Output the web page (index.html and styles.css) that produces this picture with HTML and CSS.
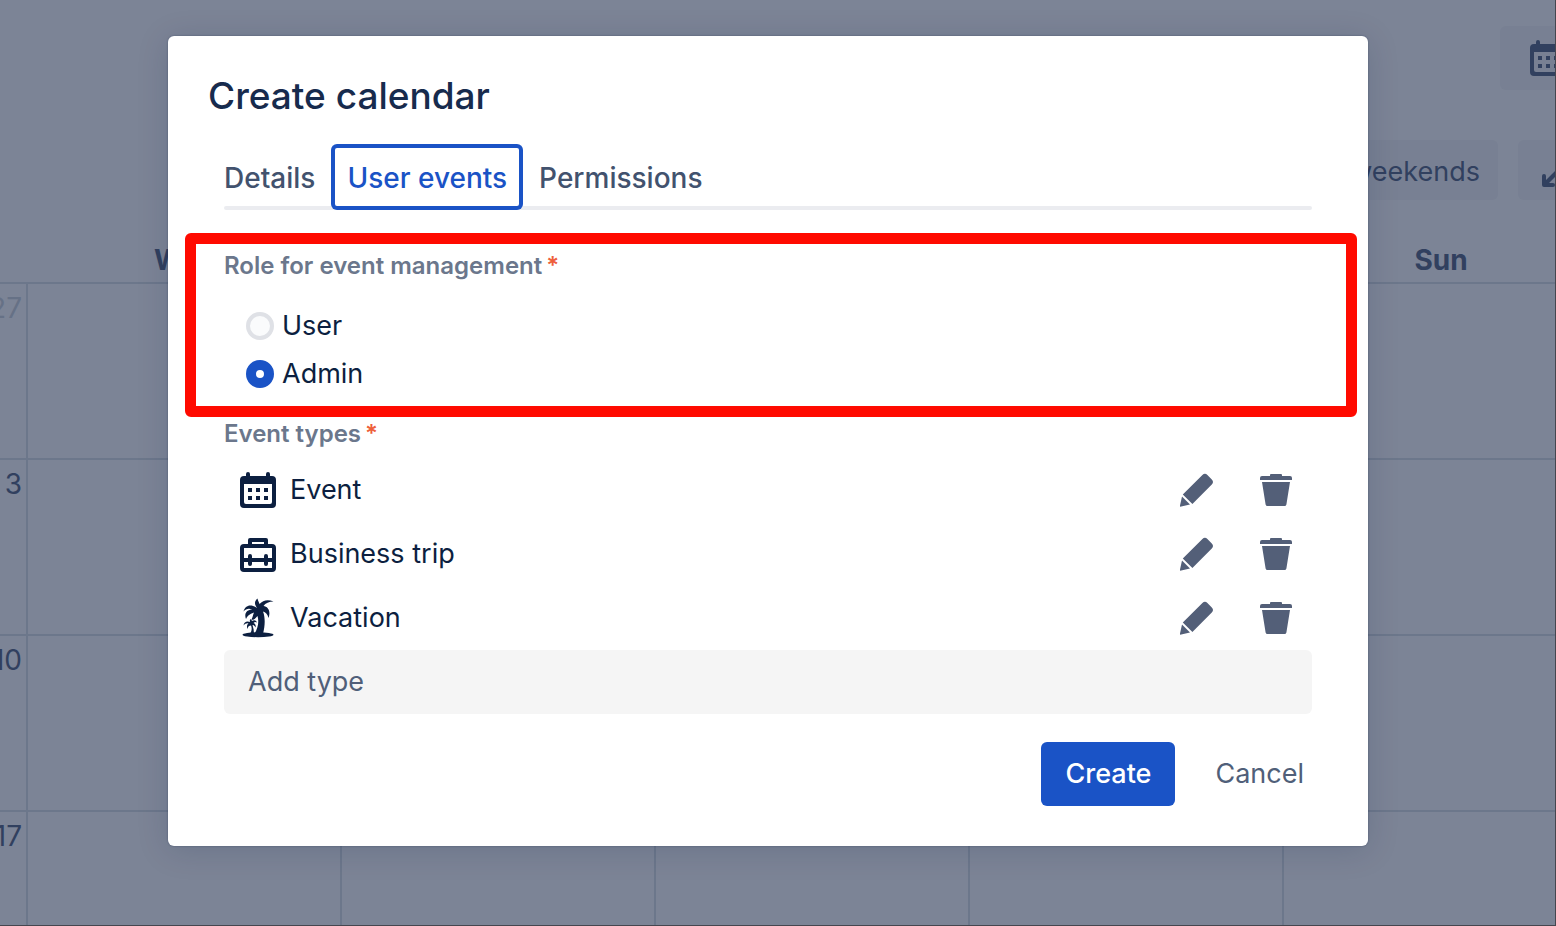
FILE: index.html
```html
<!DOCTYPE html>
<html lang="en">
<head>
    <meta charset="UTF-8">
    <meta name="viewport" content="width=device-width, initial-scale=1.0">
    <title>Create calendar</title>
    <link rel="stylesheet" href="styles.css">
</head>
<body>
    <!-- Shared icons -->
    <svg class="sprite" aria-hidden="true">
        <symbol id="icon-calendar" viewBox="0 0 24 24">
            <path fill-rule="evenodd" d="M6 5V4a1 1 0 0 1 2 0v1h8V4a1 1 0 0 1 2 0v1h1a2 2 0 0 1 2 2v12a2 2 0 0 1-2 2H5a2 2 0 0 1-2-2V7a2 2 0 0 1 2-2zM5 9v9a1 1 0 0 0 1 1h12a1 1 0 0 0 1-1V9zM7 11h2v2H7zM11 11h2v2h-2zM15 11h2v2h-2zM7 15h2v2H7zM11 15h2v2h-2zM15 15h2v2h-2z"/>
        </symbol>
        <symbol id="icon-briefcase" viewBox="0 0 24 24">
            <path fill-rule="evenodd" d="M7 7V5a1 1 0 0 1 1-1h8a1 1 0 0 1 1 1v2h2a2 2 0 0 1 2 2v10a2 2 0 0 1-2 2H5a2 2 0 0 1-2-2V9a2 2 0 0 1 2-2zM9 7h6V6H9zM5 9v5h2v-1a1 1 0 0 1 2 0v1h6v-1a1 1 0 0 1 2 0v1h2V9zM5 16v3h14v-3h-2v1a1 1 0 0 1-2 0v-1H9v1a1 1 0 0 1-2 0v-1z"/>
        </symbol>
        <symbol id="icon-palm" viewBox="0 0 48 48">
            <ellipse cx="24" cy="40.7" rx="15.5" ry="2.5"/>
            <path d="M23 14C20 10 20.500 7 23.500 4.500C24 7 25 8 25.500 10C29 6 34 5 39.500 7.500C35 7.500 31.500 9 29.500 12C34 12.500 37 17 34.500 24C33.500 20 31.500 18 29 17.500C31.500 24 31 32 29 40H20.500C24.500 33 25 27 23.500 22C21 25 19 26.500 17.500 25.500C18.500 23.500 19 21 20 18.500C15.500 20 13 22 12 25C9.800 19 13 15.500 18.500 15.500C15 14 12 14.500 9.500 17.500C11 11 17 9.500 23 14z"/>
            <path d="M16 28C15.500 26.500 16 25.500 17 25L18 27C20 25.500 22 26 23 28.500C21.500 27.500 20.500 28 19.500 29C21.500 29.500 22 31.500 21.500 33.500C20.500 31.500 19.500 31 18.500 31C19.500 34 20 37 20 40H16C18 36.500 18 34 17 31.500C15 31.500 14 32.500 13.500 35C12.500 32.500 13 30.500 14.500 29.500C12.500 29 11 30 9.500 31.500C10 28 13 26.500 16 28z"/>
        </symbol>
        <symbol id="icon-pencil" viewBox="0 0 24 24">
            <path d="M5.400 14.300L15.200 4.500a1.800 1.800 0 0 1 2.500 0l2.200 2.200a1.800 1.800 0 0 1 0 2.500L10.200 19zM5 15.200L9 19.300L4.600 20.300a.5.5 0 0 1-.6-.6z"/>
        </symbol>
        <symbol id="icon-trash" viewBox="0 0 24 24">
            <path d="M4 7V6a1 1 0 0 1 1-1h4V4.500a.5.500 0 0 1 .5-.5h5a.5.500 0 0 1 .5.500V5h4a1 1 0 0 1 1 1v1zM5 8h14l-1.800 11.200a1 1 0 0 1-1 .8H7.800a1 1 0 0 1-1-.8z"/>
        </symbol>
        <symbol id="icon-expand" viewBox="0 0 32 32">
            <path d="M20 1h9a2 2 0 0 1 2 2v9h-4V8L8 27h4a2 2 0 0 1 0 4H3a2 2 0 0 1-2-2v-9a2 2 0 0 1 4 0v4L24 5h-4z"/>
        </symbol>
    </svg>

    <div class="page">
        <div class="calendar">
            <div class="toolbar">
                <button type="button" class="tool tool-large" aria-label="Calendar view">
                    <svg class="icon"><use href="#icon-calendar"/></svg>
                </button>
            </div>
            <div class="toolbar toolbar-options">
                <button type="button" class="tool">weekends</button>
                <button type="button" class="tool" aria-label="Full screen">
                    <svg class="icon icon-small"><use href="#icon-expand"/></svg>
                </button>
            </div>
            <table class="month">
                <thead>
                    <tr><th></th><th>Wed</th><th></th><th></th><th></th><th>Sun</th></tr>
                </thead>
                <tbody>
                    <tr><td class="other-month">27</td><td></td><td></td><td></td><td></td><td></td></tr>
                    <tr><td>3</td><td></td><td></td><td></td><td></td><td></td></tr>
                    <tr><td>10</td><td></td><td></td><td></td><td></td><td></td></tr>
                    <tr><td>17</td><td></td><td></td><td></td><td></td><td></td></tr>
                </tbody>
            </table>
        </div>
    </div>

    <div class="overlay">
        <form class="modal" role="dialog" aria-labelledby="modal-title">
            <h1 id="modal-title">Create calendar</h1>

            <div class="tabs" role="tablist">
                <button type="button" class="tab" role="tab">Details</button>
                <button type="button" class="tab active" role="tab" aria-selected="true">User events</button>
                <button type="button" class="tab" role="tab">Permissions</button>
            </div>

            <div class="panel">
                <div class="roles" role="radiogroup" aria-labelledby="role-label">
                    <div class="field-label" id="role-label">Role for event management<span class="required">*</span></div>
                    <div class="options">
                        <label class="option" for="role-user"><input type="radio" id="role-user" name="role">User</label>
                        <label class="option" for="role-admin"><input type="radio" id="role-admin" name="role" checked>Admin</label>
                    </div>
                </div>

                <div class="field-label types-label">Event types<span class="required">*</span></div>
                <ul class="types">
                    <li>
                        <svg class="icon"><use href="#icon-calendar"/></svg>
                        <span class="type-name">Event</span>
                        <button type="button" class="action" aria-label="Edit Event"><svg class="icon"><use href="#icon-pencil"/></svg></button>
                        <button type="button" class="action" aria-label="Delete Event"><svg class="icon"><use href="#icon-trash"/></svg></button>
                    </li>
                    <li>
                        <svg class="icon"><use href="#icon-briefcase"/></svg>
                        <span class="type-name">Business trip</span>
                        <button type="button" class="action" aria-label="Edit Business trip"><svg class="icon"><use href="#icon-pencil"/></svg></button>
                        <button type="button" class="action" aria-label="Delete Business trip"><svg class="icon"><use href="#icon-trash"/></svg></button>
                    </li>
                    <li>
                        <svg class="icon"><use href="#icon-palm"/></svg>
                        <span class="type-name">Vacation</span>
                        <button type="button" class="action" aria-label="Edit Vacation"><svg class="icon"><use href="#icon-pencil"/></svg></button>
                        <button type="button" class="action" aria-label="Delete Vacation"><svg class="icon"><use href="#icon-trash"/></svg></button>
                    </li>
                </ul>
                <button type="button" class="add-type">Add type</button>
            </div>

            <div class="footer">
                <button type="submit" class="button primary">Create</button>
                <button type="button" class="button">Cancel</button>
            </div>
        </form>
    </div>
</body>
</html>
```

FILE: styles.css
```css
* {
    box-sizing: border-box;
}

body {
    margin: 0;
    font-family: Inter, "Liberation Sans", sans-serif;
    font-size: 27px;
    line-height: 32px;
    color: #0c1f40;
}

button {
    font: inherit;
    color: inherit;
    border: none;
    background: none;
    padding: 0;
    cursor: pointer;
}

.sprite {
    display: none;
}

.icon {
    display: block;
    flex: none;
    width: 48px;
    height: 48px;
    fill: currentColor;
}

.icon-small {
    width: 32px;
    height: 32px;
}

/* Calendar behind the dialog */
.page {
    height: 100vh;
    overflow: hidden;
    background: #7c8496;
    border-right: 1px solid #45464f;
    border-bottom: 1px solid #45464f;
    color: #31405f;
}

.calendar {
    margin: 0 -41px 0 -288px;
    padding-top: 26px;
}

.toolbar {
    display: flex;
    justify-content: flex-end;
    gap: 20px;
}

.toolbar-options {
    margin: 50px 0 40px;
}

.tool {
    display: flex;
    align-items: center;
    height: 60px;
    padding: 4px 18px 0;
    border-radius: 6px;
    background: #788093;
}

.tool .icon-small {
    margin: 0 5px;
}

.tool-large {
    height: 64px;
    padding: 0 24px;
}

.month {
    width: 100%;
    margin-left: 2px;
    table-layout: fixed;
    border-collapse: separate;
    border-spacing: 0;
    font-size: 28px;
}

.month th {
    height: 44px;
    padding: 0 0 2px;
    font-weight: 700;
    border-bottom: 2px solid #6c778b;
}

.month td {
    height: 176px;
    padding: 8px 4px;
    text-align: right;
    vertical-align: top;
    border-right: 2px solid #6c778b;
    border-bottom: 2px solid #6c778b;
}

.month .other-month {
    color: #667186;
}

/* Dialog */
.overlay {
    position: absolute;
    inset: 0;
    padding: 36px 188px 0 168px;
}

.modal {
    padding: 40px;
    background: #ffffff;
    border-radius: 6px;
    box-shadow: 0 0 2px rgba(9, 30, 66, 0.4), 0 4px 32px rgba(9, 30, 66, 0.15);
}

h1 {
    margin: 0 0 28px;
    font-size: 37px;
    line-height: 40px;
    font-weight: 500;
    color: #172b4d;
}

.tabs {
    position: relative;
    display: flex;
    height: 66px;
}

.tabs::before {
    content: "";
    position: absolute;
    left: 16px;
    right: 16px;
    bottom: 0;
    height: 4px;
    border-radius: 2px;
    background: #ebecf0;
}

.tab {
    position: relative;
    padding: 2px 16px 0;
    font-size: 28px;
    font-weight: 500;
    color: #42526e;
}

.tab.active {
    border-radius: 6px;
    box-shadow: inset 0 0 0 4px #1a53c6;
    color: #1a53c6;
}

.panel {
    padding: 40px 16px 0;
}

.roles {
    position: relative;
}

/* Highlight frame around the role options */
.roles::after {
    content: "";
    position: absolute;
    inset: -17px -45px -19px -39px;
    border: 11px solid #ff0a00;
    border-radius: 6px;
    pointer-events: none;
}

.field-label {
    font-size: 24px;
    font-weight: 600;
    color: #6b778c;
}

.required {
    margin-left: 4px;
    color: #ee5f3c;
}

.options {
    margin-top: 20px;
    padding-left: 22px;
}

.option {
    display: flex;
    align-items: center;
    gap: 8px;
    height: 48px;
}

.option input {
    appearance: none;
    width: 28px;
    height: 28px;
    margin: 0;
    border: 4px solid #dfe1e6;
    border-radius: 50%;
    background: #fafbfc;
}

.option input:checked {
    border: 10px solid #1a53c6;
    background: #ffffff;
}

.types-label {
    margin-top: 20px;
}

.types {
    list-style: none;
    margin: 8px 0 0;
    padding: 0;
}

.types li {
    display: flex;
    align-items: center;
    height: 64px;
    padding: 0 12px 0 10px;
}

.type-name {
    flex: 1;
    padding-left: 8px;
}

.action {
    margin-left: 32px;
    color: #535f78;
}

.add-type {
    display: block;
    width: 100%;
    height: 64px;
    padding: 0 24px;
    border-radius: 6px;
    background: #f5f5f5;
    color: #505f79;
    text-align: left;
}

.footer {
    display: flex;
    justify-content: flex-end;
    gap: 16px;
    margin-top: 28px;
}

.button {
    height: 64px;
    padding: 0 24px;
    border-radius: 6px;
    color: #505f79;
}

.button.primary {
    background: #1a53c6;
    color: #ffffff;
    font-weight: 500;
}
```
